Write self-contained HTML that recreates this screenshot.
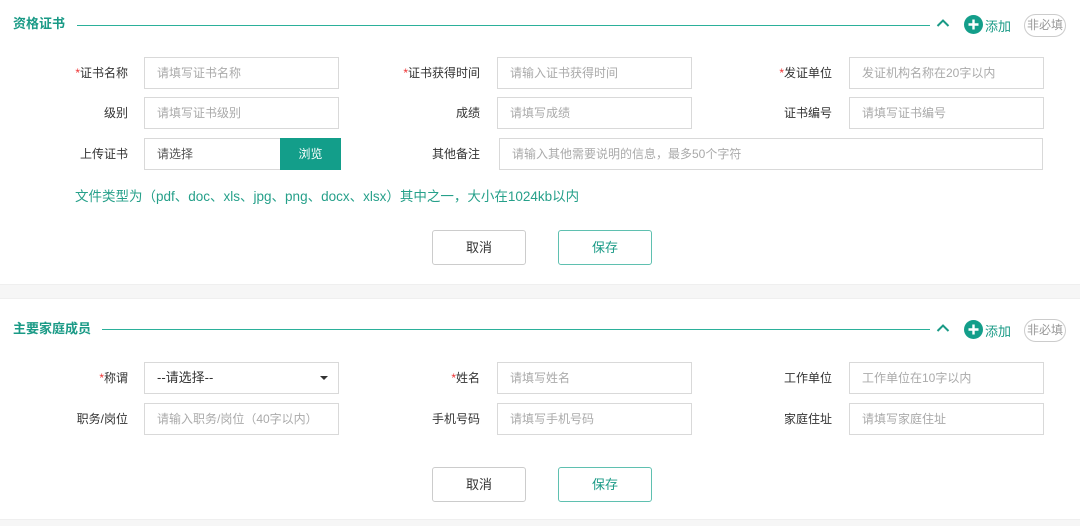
<!DOCTYPE html>
<html><head><meta charset="utf-8"><style>
*{margin:0;padding:0;box-sizing:border-box}
body{width:1080px;height:526px;background:#fff;position:relative;overflow:hidden;font-family:"Liberation Sans","Noto Sans CJK SC",sans-serif;font-size:12px;color:#333}
.a{position:absolute}
.t{font-size:13px;font-weight:bold;color:#1a9a86;line-height:16px}
.ln{height:1px;background:#2bb09a}
.lb{text-align:right;width:120px;line-height:32px;font-size:12px;color:#333}
.lb i{color:#e33;font-style:normal}
.in{border:1px solid #d9d9d9;height:32px;line-height:30px;padding-left:12px;color:#aaa;font-size:12px;background:#fff}
.btn{border:1px solid #ccc;border-radius:3px;text-align:center;line-height:33px;font-size:13px;width:94px;height:35px}
.pill{border:1px solid #ccc;border-radius:12px;width:42px;height:23px;line-height:21px;text-align:center;color:#999;font-size:12px}
</style></head><body>
<div class="a t" style="left:13px;top:16px">资格证书</div>
<div class="a ln" style="left:77px;top:25px;width:853px"></div>
<svg class="a" style="left:936px;top:18px" width="14" height="10"><path d="M1.5 8 L7 2.5 L12.5 8" stroke="#1a9a86" stroke-width="2" fill="none"/></svg>
<svg class="a" style="left:964px;top:15px" width="19" height="19"><circle cx="9.5" cy="9.5" r="9.5" fill="#139e8a"/><path d="M9.5 4.5v10M4.5 9.5h10" stroke="#fff" stroke-width="2.4"/></svg>
<div class="a" style="left:985px;top:16px;color:#1a9a86;font-size:13px">添加</div>
<div class="a pill" style="left:1024px;top:14px">非必填</div>

<div class="a lb" style="left:8px;top:57px"><i>*</i>证书名称</div>
<div class="a in" style="left:144px;top:57px;width:195px">请填写证书名称</div>
<div class="a lb" style="left:360px;top:57px"><i>*</i>证书获得时间</div>
<div class="a in" style="left:497px;top:57px;width:195px">请输入证书获得时间</div>
<div class="a lb" style="left:712px;top:57px"><i>*</i>发证单位</div>
<div class="a in" style="left:849px;top:57px;width:195px">发证机构名称在20字以内</div>

<div class="a lb" style="left:8px;top:97px">级别</div>
<div class="a in" style="left:144px;top:97px;width:195px">请填写证书级别</div>
<div class="a lb" style="left:360px;top:97px">成绩</div>
<div class="a in" style="left:497px;top:97px;width:195px">请填写成绩</div>
<div class="a lb" style="left:712px;top:97px">证书编号</div>
<div class="a in" style="left:849px;top:97px;width:195px">请填写证书编号</div>

<div class="a lb" style="left:8px;top:138px">上传证书</div>
<div class="a in" style="left:144px;top:138px;width:137px;color:#555">请选择</div>
<div class="a" style="left:280px;top:138px;width:61px;height:32px;background:#139e8a;color:#fff;text-align:center;line-height:32px">浏览</div>
<div class="a lb" style="left:360px;top:138px">其他备注</div>
<div class="a in" style="left:499px;top:138px;width:544px">请输入其他需要说明的信息，最多50个字符</div>

<div class="a" style="left:75px;top:185px;color:#26a08a;font-size:13.5px">文件类型为（pdf、doc、xls、jpg、png、docx、xlsx）其中之一，大小在1024kb以内</div>

<div class="a btn" style="left:432px;top:230px">取消</div>
<div class="a btn" style="left:558px;top:230px;border-color:#5fc0b0;color:#1a9a86">保存</div>

<div class="a" style="left:0;top:284px;width:1080px;height:15px;background:#f6f6f6;border-top:1px solid #efefef;border-bottom:1px solid #efefef"></div>

<div class="a t" style="left:13px;top:321px">主要家庭成员</div>
<div class="a ln" style="left:102px;top:329px;width:828px"></div>
<svg class="a" style="left:936px;top:323px" width="14" height="10"><path d="M1.5 8 L7 2.5 L12.5 8" stroke="#1a9a86" stroke-width="2" fill="none"/></svg>
<svg class="a" style="left:964px;top:320px" width="19" height="19"><circle cx="9.5" cy="9.5" r="9.5" fill="#139e8a"/><path d="M9.5 4.5v10M4.5 9.5h10" stroke="#fff" stroke-width="2.4"/></svg>
<div class="a" style="left:985px;top:321px;color:#1a9a86;font-size:13px">添加</div>
<div class="a pill" style="left:1024px;top:319px">非必填</div>

<div class="a lb" style="left:8px;top:362px"><i>*</i>称谓</div>
<div class="a in" style="left:144px;top:362px;width:195px;color:#333;font-size:13px">--请选择--</div>
<svg class="a" style="left:319px;top:375px" width="10" height="6"><path d="M1 1h8L5 5z" fill="#333"/></svg>
<div class="a lb" style="left:360px;top:362px"><i>*</i>姓名</div>
<div class="a in" style="left:497px;top:362px;width:195px">请填写姓名</div>
<div class="a lb" style="left:712px;top:362px">工作单位</div>
<div class="a in" style="left:849px;top:362px;width:195px">工作单位在10字以内</div>

<div class="a lb" style="left:8px;top:403px">职务/岗位</div>
<div class="a in" style="left:144px;top:403px;width:195px">请输入职务/岗位（40字以内）</div>
<div class="a lb" style="left:360px;top:403px">手机号码</div>
<div class="a in" style="left:497px;top:403px;width:195px">请填写手机号码</div>
<div class="a lb" style="left:712px;top:403px">家庭住址</div>
<div class="a in" style="left:849px;top:403px;width:195px">请填写家庭住址</div>

<div class="a btn" style="left:432px;top:467px">取消</div>
<div class="a btn" style="left:558px;top:467px;border-color:#5fc0b0;color:#1a9a86">保存</div>

<div class="a" style="left:0;top:519px;width:1080px;height:7px;background:#f6f6f6;border-top:1px solid #efefef"></div>
</body></html>
